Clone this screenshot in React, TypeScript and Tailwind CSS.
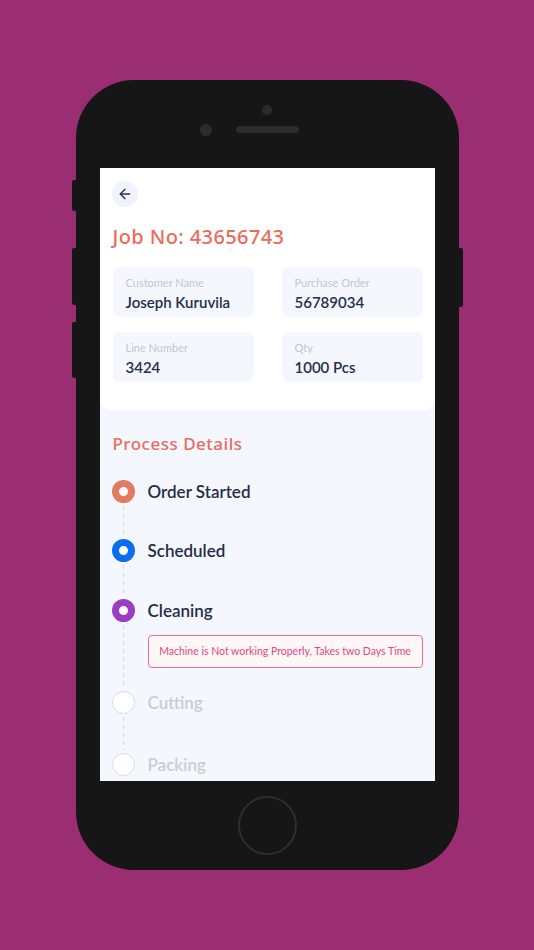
import { ArrowLeft } from "lucide-react";

const details = [
  { label: "Customer Name", value: "Joseph Kuruvila" },
  { label: "Purchase Order", value: "56789034" },
  { label: "Line Number", value: "3424" },
  { label: "Qty", value: "1000 Pcs" },
];

type Step = {
  name: string;
  ring: string;
  done: boolean;
  height: string;
  note?: string;
};

const steps: Step[] = [
  { name: "Order Started", ring: "border-[7px] border-[#e17c62]", done: true, height: "h-[59px]" },
  { name: "Scheduled", ring: "border-[7px] border-[#0b6ef0]", done: true, height: "h-[60px]" },
  {
    name: "Cleaning",
    ring: "border-[7px] border-[#9a3dc0]",
    done: true,
    height: "h-[92px]",
    note: "Machine is Not working Properly, Takes two Days Time",
  },
  { name: "Cutting", ring: "border-[1.5px] border-[#d9dce2]", done: false, height: "h-[62px]" },
  { name: "Packing", ring: "border-[1.5px] border-[#d9dce2]", done: false, height: "h-[40px]" },
];

function Timeline() {
  return (
    <div className="flex flex-col">
      {steps.map((s, i) => (
        <div key={s.name} className={`flex gap-[13px] ${s.height}`}>
          <div className="flex w-[23px] shrink-0 flex-col items-center">
            <div className={`h-[23px] w-[23px] shrink-0 rounded-full bg-white ${s.ring}`} />
            {i < steps.length - 1 && (
              <div className="my-[3px] w-px flex-1 bg-[repeating-linear-gradient(to_bottom,#d3d6dc_0_4px,transparent_4px_8px)]" />
            )}
          </div>
          <div className="flex flex-1 flex-col">
            <div
              className={`flex h-[23px] items-center text-[17px] font-semibold ${
                s.done ? "text-[#262d45]" : "text-[#c9ccd3]"
              }`}
            >
              {s.name}
            </div>
            {s.note && (
              <div className="mt-[13px] flex h-[33px] items-center justify-center rounded-[4px] border border-[#ea6d92] bg-[#fff6f8] text-[10.5px] text-[#dc4a7b]">
                {s.note}
              </div>
            )}
          </div>
        </div>
      ))}
    </div>
  );
}

function Screen() {
  return (
    <div className="h-[613px] w-[335px] overflow-hidden bg-[#f4f7fe] font-['Lato','Liberation_Sans',sans-serif]">
      <div className="rounded-b-[12px] bg-white px-[13px] pb-[28px] pt-[13px] pr-[12px]">
        <div className="-ml-px flex h-[26px] w-[26px] items-center justify-center rounded-full bg-[#f0f3fb]">
          <ArrowLeft size={16} strokeWidth={2} className="text-[#2b3048]" />
        </div>
        <h1 className="mt-[17px] font-['Noto_Sans',sans-serif] text-[20px] font-medium leading-[25px] tracking-[0.4px] text-[#ec6b5b]">
          Job No: 43656743
        </h1>
        <div className="mt-[18px] grid grid-cols-2 gap-x-[28px] gap-y-[15px]">
          {details.map((d) => (
            <div key={d.label} className="h-[50px] rounded-[6px] bg-[#f4f7fe] pl-[13px] pt-[9px]">
              <div className="text-[11px] leading-[14px] text-[#c2c6ce]">{d.label}</div>
              <div className="mt-[3px] text-[15px] font-semibold leading-[18px] text-[#262e47]">{d.value}</div>
            </div>
          ))}
        </div>
      </div>
      <div className="px-[12px] pt-[23px]">
        <h2 className="ml-px font-['Noto_Sans',sans-serif] text-[17px] font-medium leading-[22px] tracking-[0.5px] text-[#ec6b5b]">
          Process Details
        </h2>
        <div className="mt-[25px]">
          <Timeline />
        </div>
      </div>
    </div>
  );
}

export default function App() {
  return (
    <div className="flex h-[950px] w-[534px] items-center justify-center bg-[#9b2d72]">
      <div className="relative flex h-[790px] w-[383px] flex-col items-center rounded-[58px] bg-[#161616] pt-[88px]">
        {/* side buttons */}
        <div className="absolute left-[-4px] top-[100px] h-[31px] w-[4px] rounded-l-[2px] bg-[#161616]" />
        <div className="absolute left-[-4px] top-[168px] h-[57px] w-[4px] rounded-l-[2px] bg-[#161616]" />
        <div className="absolute left-[-4px] top-[242px] h-[56px] w-[4px] rounded-l-[2px] bg-[#161616]" />
        <div className="absolute right-[-4px] top-[168px] h-[59px] w-[4px] rounded-r-[2px] bg-[#161616]" />
        {/* camera + speaker */}
        <div className="absolute left-[186px] top-[25px] h-[10px] w-[10px] rounded-full bg-[#2c2c2c]" />
        <div className="absolute left-[124px] top-[44px] h-[12px] w-[12px] rounded-full bg-[#2c2c2c]" />
        <div className="absolute left-[160px] top-[46px] h-[7px] w-[63px] rounded-full bg-[#2c2c2c]" />
        <Screen />
        <div className="mt-[15px] h-[59px] w-[59px] rounded-full border-2 border-[#2e2e2e]" />
      </div>
    </div>
  );
}
